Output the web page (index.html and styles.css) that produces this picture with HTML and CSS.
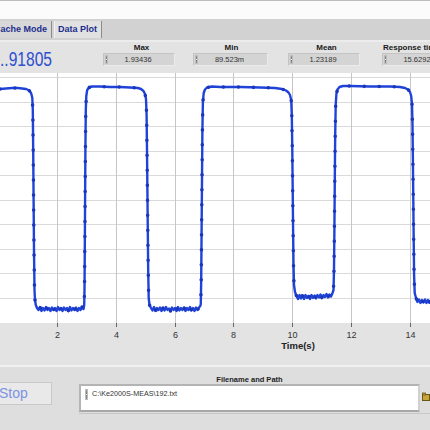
FILE: index.html
```html
<!DOCTYPE html>
<html lang="en">
<head>
<meta charset="UTF-8">
<meta name="viewport" content="width=device-width, initial-scale=1.0">
<title>Data Plot</title>
<link rel="stylesheet" href="styles.css">
</head>
<body>
    <div class="topstrip"></div>

    <div class="tabs">
        <div class="tab first">Cache Mode</div>
        <div class="tab active">Data Plot</div>
    </div>

    <div class="readouts">
        <div class="bignum"><span>..91805</span></div>
        <div class="readout">
            <div class="label">Max</div>
            <div class="box"><i class="spin"></i><span>1.93436</span></div>
        </div>
        <div class="readout">
            <div class="label">Min</div>
            <div class="box wide"><i class="spin"></i><span>89.523m</span></div>
        </div>
        <div class="readout">
            <div class="label">Mean</div>
            <div class="box"><i class="spin"></i><span>1.23189</span></div>
        </div>
        <div class="readout">
            <div class="label left">Response time</div>
            <div class="box"><i class="spin"></i><span>15.6292</span></div>
        </div>
    </div>

    <svg class="graph" width="430" height="292" viewBox="0 73 430 292">
        <defs>
            <path id="wave"
            d="M0,89 L6,88.5 12,88 18,88 22,88.5 26,89 28.5,90 30.5,92 31.5,94.5 32.3,98 32.8,110 33.2,150 33.6,200 34,250 34.5,290 35,300 35.8,305
            L37,308 38.5,310 40,307 41.5,311 43,308 44.5,310.5 46,307 47.5,310 49,308 50.5,311 52,307.5 53.5,310 55,308 56.5,311 58,307 59.5,310 61,308.5 62.5,311 64,307.5 65.5,310 67,308 68.5,311 70,307 71.5,310.5 73,308 74.5,310 76,307.5 77.5,311 79,308 80.5,310 82,307 83.5,309 84.2,305
            L84.5,290 84.8,250 85.1,200 85.4,150 85.8,110 86.3,96 87.2,90 89,87.5 92,86.5 100,86.5 110,87 120,87 130,87.5 138,88 141,89 143.5,91 145,94 146,99 146.6,115 147,150 147.4,190 147.8,230 148.2,270 148.7,298 149.5,305
            L151,308 152.5,310.5 154,307 155.5,311 157,308 158.5,310 160,307.5 161.5,311 163,308 164.5,310.5 166,307 167.5,310 169,308.5 170.5,311 172,307.5 173.5,310 175,308 176.5,311 178,307 179.5,310.5 181,308 182.5,310 184,307.5 185.5,311 187,308 188.5,310 190,307 191.5,310.5 193,308 194.5,311 196,307.5 197.5,310 199,307.5 200.3,306
            L200.8,304 201.2,280 201.6,230 202,180 202.4,130 202.9,102 203.7,93 205,89.5 207,87.5 212,86.5 220,87 240,87 260,87.5 275,88 282,89 286,90.5 288.5,92.5 290,95 291.2,100 291.8,115 292.3,150 292.7,190 293.1,230 293.5,265 294,285 295,292
            L296.5,296 298,299 299.5,295 301,298.5 302.5,295.5 304,299 305.5,295 307,298 308.5,296 310,299 311.5,295 313,298 314.5,295.5 316,298.5 317.5,295 319,297.5 320.5,294.5 322,298 323.5,295 325,297 326.5,294 328,297.5 329.5,294.5 331,296.5 332.5,293 333.5,290
            L334,270 334.4,230 334.8,180 335.2,135 335.7,105 336.4,94 337.5,89.5 339.5,87 343,86 350,86 370,86.5 390,86.5 400,87 405,88 408,89.5 410,92 411.2,96 412,104 412.5,125 412.9,160 413.3,200 413.7,240 414.1,275 414.7,293 416,298
            L417.5,302 419,299.5 420.5,303 422,300 423.5,302.5 425,299.5 426.5,303 428,300 429.5,302.5 431,300"/>
        </defs>

        <rect x="0" y="73" width="430" height="250" fill="#ffffff"/>
        <g stroke="#dadada" stroke-width="1">
            <line x1="0" y1="77.5" x2="430" y2="77.5"/>
            <line x1="0" y1="102.5" x2="430" y2="102.5"/>
            <line x1="0" y1="126.5" x2="430" y2="126.5"/>
            <line x1="0" y1="151.5" x2="430" y2="151.5"/>
            <line x1="0" y1="175.5" x2="430" y2="175.5"/>
            <line x1="0" y1="200.5" x2="430" y2="200.5"/>
            <line x1="0" y1="224.5" x2="430" y2="224.5"/>
            <line x1="0" y1="249.5" x2="430" y2="249.5"/>
            <line x1="0" y1="273.5" x2="430" y2="273.5"/>
            <line x1="0" y1="298.5" x2="430" y2="298.5"/>
        </g>
        <g stroke="#c6c6c6" stroke-width="1">
            <line x1="57.5" y1="73" x2="57.5" y2="323"/>
            <line x1="116.5" y1="73" x2="116.5" y2="323"/>
            <line x1="175.5" y1="73" x2="175.5" y2="323"/>
            <line x1="233.5" y1="73" x2="233.5" y2="323"/>
            <line x1="292.5" y1="73" x2="292.5" y2="323"/>
            <line x1="351.5" y1="73" x2="351.5" y2="323"/>
            <line x1="410.5" y1="73" x2="410.5" y2="323"/>
        </g>

        <use href="#wave" fill="none" stroke="#1f43d8" stroke-width="2.4" stroke-linejoin="round"/>
        <use href="#wave" fill="none" stroke="#1a37bb" stroke-width="3.6" stroke-linecap="round" stroke-dasharray="0 15"/>

        <g stroke="#666666" stroke-width="1">
            <line x1="57.5" y1="323" x2="57.5" y2="327"/>
            <line x1="116.5" y1="323" x2="116.5" y2="327"/>
            <line x1="175.5" y1="323" x2="175.5" y2="327"/>
            <line x1="233.5" y1="323" x2="233.5" y2="327"/>
            <line x1="292.5" y1="323" x2="292.5" y2="327"/>
            <line x1="351.5" y1="323" x2="351.5" y2="327"/>
            <line x1="410.5" y1="323" x2="410.5" y2="327"/>
        </g>
        <g class="ticks" text-anchor="middle">
            <text x="57.5" y="337.5">2</text>
            <text x="116.5" y="337.5">4</text>
            <text x="175.5" y="337.5">6</text>
            <text x="233.5" y="337.5">8</text>
            <text x="292.5" y="337.5">10</text>
            <text x="351.5" y="337.5">12</text>
            <text x="410.5" y="337.5">14</text>
        </g>
        <text class="axis" x="298" y="349" text-anchor="middle">Time(s)</text>
    </svg>

    <div class="bottom">
        <div class="stop">Stop</div>
        <div class="path">
            <div class="pathlabel">Filename and Path</div>
            <div class="pathrow">
                <div class="pathbox"><i class="spin"></i><span>C:\Ke2000S-MEAS\192.txt</span></div>
                <div class="browse">
                    <svg width="8" height="10" viewBox="0 0 8 10">
                        <rect x="0.5" y="2.5" width="7" height="6" fill="#c9a43a" stroke="#6b5414"/>
                        <rect x="0.5" y="1" width="3" height="2" fill="#c9a43a" stroke="#6b5414" stroke-width="0.8"/>
                    </svg>
                </div>
            </div>
        </div>
    </div>
</body>
</html>
```

FILE: styles.css
```css
body {
    margin: 0;
    width: 430px;
    height: 430px;
    overflow: hidden;
    background-color: #e3e3e3;
    font-family: "Liberation Sans", Arial, sans-serif;
}
.topstrip {
    height: 18px;
    border-top: 1px solid #bcbcbc;
    background-color: #fbfbfb;
}
.tabs {
    height: 21px;
    display: flex;
    align-items: flex-end;
    gap: 2px;
    background-color: #d2d2d2;
    overflow: hidden;
}
.tab {
    height: 17px;
    line-height: 17px;
    margin-bottom: 2px;
    padding: 0 4px 0 3px;
    font-size: 9px;
    font-weight: bold;
    color: #1d2e8e;
    white-space: nowrap;
    background-color: #d8d8d8;
    border-left: 1px solid #f2f2f2;
    border-right: 1px solid #8c8c8c;
}
.tab.first {
    margin-left: -11px;
    padding-left: 4px;
}
.tab.active {
    background-color: #e1e1e1;
}
.readouts {
    height: 31px;
    border-top: 2px solid #ececec;
    display: grid;
    grid-template-columns: 103px 90px 95px 94px 1fr;
    overflow: hidden;
}
.bignum {
    padding-top: 5px;
    line-height: 24px;
    font-size: 20px;
    color: #2f4fd0;
    white-space: nowrap;
}
.bignum span {
    display: inline-block;
    transform: scaleX(0.78);
    transform-origin: left;
}
.readout {
    padding-top: 1px;
}
.label {
    width: 73px;
    padding-left: 4px;
    box-sizing: border-box;
    line-height: 9px;
    font-size: 8px;
    font-weight: bold;
    color: #1a1a1a;
    text-align: center;
    white-space: nowrap;
}
.label.left {
    padding-left: 1px;
    text-align: left;
}
.box {
    width: 72px;
    height: 13px;
    margin-top: 1px;
    box-sizing: border-box;
    display: flex;
    align-items: center;
    background-color: #d4d4d4;
    border: 1px solid #c4c4c4;
    border-right-color: #ececec;
    border-bottom-color: #ececec;
    font-size: 7.5px;
    color: #333;
}
.box.wide {
    width: 75px;
}
.box span {
    flex: 1;
    text-align: center;
    padding-right: 6px;
}
.spin {
    display: block;
    width: 3px;
    height: 9px;
    margin-left: 1px;
    background: linear-gradient(#9a9a9a, #6e6e6e 45%, #f0f0f0 50%, #6e6e6e 55%, #9a9a9a);
    border: 1px solid #bcbcbc;
    box-sizing: border-box;
}
.graph {
    display: block;
}
.ticks {
    font-size: 9px;
    fill: #333;
}
.axis {
    font-size: 9.5px;
    font-weight: bold;
    fill: #222;
}
.bottom {
    height: 63px;
    border-top: 2px solid #f0f0f0;
    background-color: #dedede;
    display: flex;
}
.stop {
    width: 57px;
    height: 23px;
    margin: 15px 0 0 -2px;
    box-sizing: border-box;
    background-color: #e9e9e9;
    border: 1px solid #c9c9c9;
    font-size: 14px;
    line-height: 21px;
    color: #7c93e4;
}
.path {
    margin: 8px 0 0 27px;
}
.pathlabel {
    width: 341px;
    line-height: 9px;
    font-size: 7.5px;
    font-weight: bold;
    color: #222;
    text-align: center;
}
.pathrow {
    display: flex;
    gap: 2px;
    border-bottom: 1px solid #c8c8c8;
    padding-bottom: 1px;
}
.pathbox {
    width: 341px;
    height: 28px;
    box-sizing: border-box;
    display: flex;
    align-items: flex-start;
    gap: 4px;
    padding: 3px 0 0 3px;
    background-color: #fff;
    border: 2px solid #b4b4b4;
    border-right-color: #d0d0d0;
    border-bottom-color: #a8a8a8;
    font-size: 7.2px;
    line-height: 9px;
    color: #333;
}
.pathbox .spin {
    height: 11px;
}
.browse {
    padding-top: 4px;
}
```
